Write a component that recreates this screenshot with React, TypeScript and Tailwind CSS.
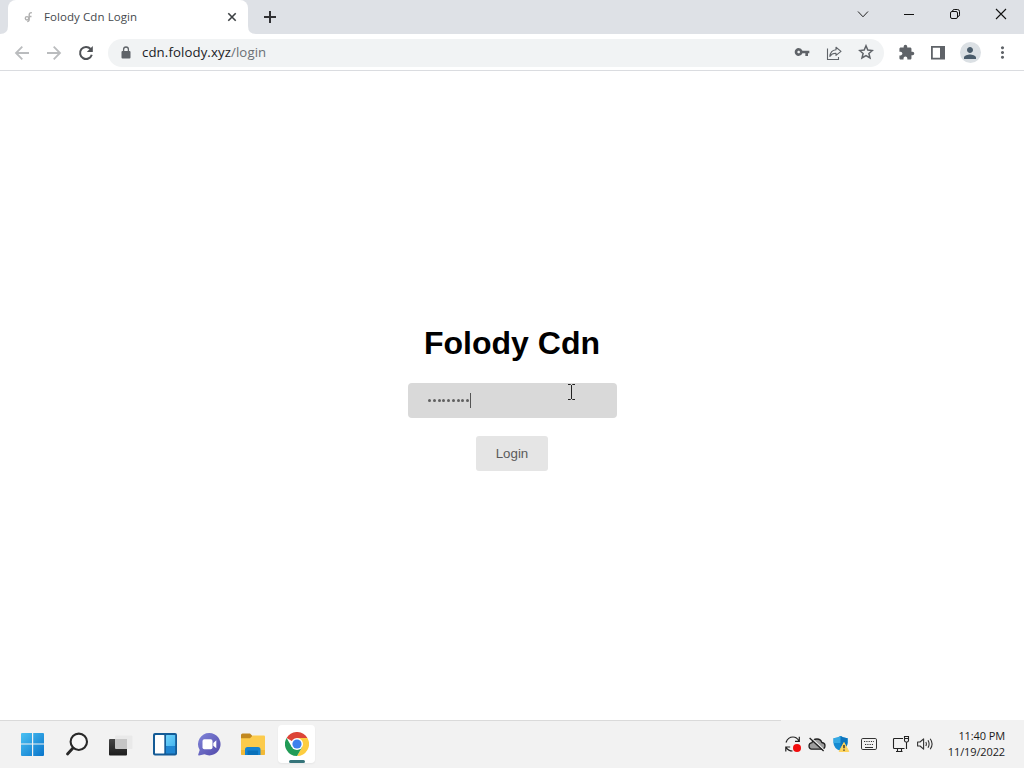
import type { ReactNode } from "react";
import { MdExtension, MdMoreVert, MdPerson, MdVpnKey } from "react-icons/md";

const Cell = ({ className, children }: { className: string; children: ReactNode }) => (
  <div className={`flex shrink-0 items-center justify-center ${className}`}>{children}</div>
);

const TabStrip = () => (
  <div className="flex h-[34px] bg-[#dee1e6]">
    {/* Foot of the tab on the left */}
    <svg className="mt-[26px] h-2 w-2 shrink-0" viewBox="0 0 8 8">
      <path d="M8 0V8H0Q8 8 8 0Z" fill="#fff" />
    </svg>
    <div className="flex w-60 shrink-0 items-center rounded-t-lg bg-white pr-2 pl-[14px]">
      <svg className="h-4 w-3" viewBox="0 0 12 16" fill="none" stroke="#b0b0b0" strokeWidth="1.4">
        <path d="M9.8 3.8Q7.5 3.3 7.2 5.5V10.5Q7 12.6 5.2 12.6M7.2 7.5H9.5" />
        <circle cx="5" cy="9.3" r="1.7" />
      </svg>
      <span className="ml-[10px] text-[11.5px] tracking-[0.08px] whitespace-nowrap text-[#45494d]">
        Folody Cdn Login
      </span>
      <svg className="ml-auto h-4 w-4" viewBox="0 0 16 16" stroke="#3c4043" strokeWidth="1.6">
        <path d="M4.3 4.3l7.4 7.4M11.7 4.3l-7.4 7.4" />
      </svg>
    </div>
    <svg className="mt-[26px] h-2 w-2 shrink-0" viewBox="0 0 8 8">
      <path d="M0 0V8H8Q0 8 0 0Z" fill="#fff" />
    </svg>
    <Cell className="w-7">
      <svg className="h-4 w-4" viewBox="0 0 16 16" stroke="#303134" strokeWidth="2">
        <path d="M8 2v12M2 8h12" />
      </svg>
    </Cell>

    {/* Window buttons */}
    <div className="ml-auto flex h-7">
      <Cell className="w-[46px]">
        <svg className="h-4 w-4" viewBox="0 0 16 16" fill="none" stroke="#222">
          <path d="M3 5.5l5 5.3 5-5.3" />
        </svg>
      </Cell>
      <Cell className="w-[46px]">
        <svg className="h-4 w-4" viewBox="0 0 16 16" stroke="#111">
          <path d="M3 8.5h10" />
        </svg>
      </Cell>
      <Cell className="w-[46px]">
        <svg className="h-4 w-4" viewBox="0 0 16 16" fill="none" stroke="#111">
          <rect x="3.5" y="5.5" width="7" height="7" rx="1.5" />
          <path d="M5.5 5.2V5Q5.8 3.5 7.2 3.5H10.5Q12.5 3.5 12.5 5.5V8.8Q12.5 10.4 11 10.5" />
        </svg>
      </Cell>
      <Cell className="w-[46px]">
        <svg className="h-4 w-4" viewBox="0 0 16 16" stroke="#111" strokeWidth="1.1">
          <path d="M3 3l10 10M13 3L3 13" />
        </svg>
      </Cell>
    </div>
  </div>
);

const Toolbar = () => (
  <div className="flex h-[37px] items-center border-b border-[#dadce0] bg-white pt-px pl-[6px] text-[#5f6368]">
    <Cell className="w-8">
      <svg className="h-4 w-4" viewBox="0 0 16 16" fill="none" stroke="#babcbe" strokeWidth="1.8">
        <path d="M15 8H2.2M8.3 1.7L2 8l6.3 6.3" />
      </svg>
    </Cell>
    <Cell className="w-8">
      <svg className="h-4 w-4" viewBox="0 0 16 16" fill="none" stroke="#babcbe" strokeWidth="1.8">
        <path d="M1 8H13.8M7.7 1.7L14 8l-6.3 6.3" />
      </svg>
    </Cell>
    <Cell className="w-8">
      <svg className="h-4 w-4" viewBox="0 0 16 16" fill="none" stroke="#4f5256" strokeWidth="2">
        <path d="M12.6 4A6 6 0 1 0 13.8 9.8" />
        <path d="M14.8 1V7H8.8Z" fill="#4f5256" stroke="none" />
      </svg>
    </Cell>
    <div className="ml-[6px] flex h-7 w-[776px] items-center rounded-full bg-[#f1f3f4] pl-[11px]">
      <svg className="h-[14px] w-[14px]" viewBox="0 0 14 14">
        <rect x="2.5" y="5" width="9" height="7.5" rx="1" fill="#5f6368" />
        <path d="M4.6 6V3.3Q4.6 1 7 1T9.4 3.3V6" fill="none" stroke="#5f6368" strokeWidth="1.3" />
      </svg>
      <span className="ml-[9px] text-[13.2px] tracking-[0.11px] whitespace-nowrap text-[#202124]">
        cdn.folody.xyz<span className="text-[#6b6f74]">/login</span>
      </span>
      <div className="ml-auto flex pr-[2px]">
        <Cell className="w-8 pb-[2px]">
          <MdVpnKey size={16} />
        </Cell>
        <Cell className="w-8">
          <svg className="h-4 w-4" viewBox="0 0 16 16" fill="none" stroke="#5f6368" strokeWidth="1.1">
            <path d="M1.5 3.5V14.5H12.5V12" />
            <path d="M10 2.3L15 6.4 10 10.4V8.2Q6 8 3.8 11.4 4.5 5.3 10 4.7Z" strokeLinejoin="round" />
          </svg>
        </Cell>
        <Cell className="w-8 pb-px">
          <svg className="h-4 w-4" viewBox="0 0 16 16" fill="none" stroke="#5f6368" strokeWidth="1.5">
            <path d="M8 1.8L9.8 6.1 14.4 6.5 10.9 9.5 12 14 8 11.6 4 14 5.1 9.5 1.6 6.5 6.2 6.1Z" />
          </svg>
        </Cell>
      </div>
    </div>
    <div className="ml-[6px] flex">
      <Cell className="w-8">
        <MdExtension size={17} />
      </Cell>
      <Cell className="w-8">
        <svg className="h-4 w-4" viewBox="0 0 16 16">
          <path d="M1 1H15V14.5H1ZM2.8 2.8V12.7H10V2.8Z" fill="#5f6368" fillRule="evenodd" />
        </svg>
      </Cell>
      <Cell className="w-8">
        <span className="flex h-[21px] w-[21px] items-center justify-center rounded-full bg-[#dbe0e4] text-[#4a5c6b]">
          <MdPerson size={18} />
        </span>
      </Cell>
      <Cell className="w-8">
        <MdMoreVert size={19} />
      </Cell>
    </div>
  </div>
);

const LoginPage = () => (
  <main className="relative flex flex-1 flex-col items-center bg-white pt-[254px] font-['Liberation_Sans',Arial,sans-serif]">
    <h1 className="text-[32px] leading-[37px] font-bold text-black">Folody Cdn</h1>
    <div className="mt-[21px] ml-px flex h-[35px] w-[209px] items-center rounded bg-[#d9d9d9] pl-5">
      <span className="flex gap-[1.75px]">
        {Array.from({ length: 9 }, (_, i) => (
          <span key={i} className="h-[3px] w-[3px] rounded-full bg-[#606060]" />
        ))}
      </span>
      <span className="ml-px h-[15px] w-px bg-[#555]" />
    </div>
    <button className="mt-[18px] h-[35px] w-[72px] rounded-[3px] bg-[#e5e5e5] text-[13.3px] text-[#5a5a5a]">
      Login
    </button>

    {/* Text cursor of the mouse */}
    <svg
      className="absolute top-[313px] left-[567px] h-[17px] w-[9px]"
      viewBox="0 0 9 17"
      fill="none"
      stroke="#222"
    >
      <path d="M1 .5H3.5L4.5 1.5 5.5 .5H8M4.5 1V15M1 15.5H3.5L4.5 14.5 5.5 15.5H8" />
    </svg>
  </main>
);

const StartIcon = () => (
  <svg className="h-6 w-6" viewBox="0 0 24 24">
    <defs>
      <linearGradient id="start" x1="0" y1="0" x2="24" y2="24" gradientUnits="userSpaceOnUse">
        <stop stopColor="#4cc3f4" />
        <stop offset="1" stopColor="#0873ca" />
      </linearGradient>
    </defs>
    <path d="M1 1H11V11.4H0V2Q0 1 1 1ZM12.2 1H22Q23 1 23 2V11.4H12.2ZM0 12.6H11V24H1Q0 24 0 23ZM12.2 12.6H23V23Q23 24 22 24H12.2Z" fill="url(#start)" />
  </svg>
);

const SearchIcon = () => (
  <svg className="h-6 w-6" viewBox="0 0 24 24" fill="none" stroke="#292929">
    <circle cx="13.8" cy="9.8" r="8.2" strokeWidth="2.1" fill="#f8f8f8" />
    <path d="M8 16L2.5 22" strokeWidth="2.8" strokeLinecap="round" />
  </svg>
);

const TaskViewIcon = () => (
  <svg className="h-6 w-6" viewBox="0 0 24 24">
    <defs>
      <linearGradient id="task" x2="0" y2="1">
        <stop stopColor="#454545" />
        <stop offset="1" stopColor="#1d1d1d" />
      </linearGradient>
    </defs>
    <rect x="6" y="3.5" width="17.5" height="13.5" rx="1" fill="#e9e9e9" />
    <rect x="0" y="7" width="18" height="16.5" rx="1" fill="url(#task)" />
    <path d="M6 7H18V17H7Q6 17 6 16Z" fill="#c5c5c5" />
  </svg>
);

const WidgetsIcon = () => (
  <svg className="h-6 w-6" viewBox="0 0 24 24">
    <defs>
      <linearGradient id="widgets" x2="1" y2="1">
        <stop stopColor="#71d4fb" />
        <stop offset="1" stopColor="#45b5ef" />
      </linearGradient>
    </defs>
    <rect y="1" width="24" height="22.5" rx="2" fill="#145b96" />
    <rect x="2" y="3" width="9.3" height="18.5" rx=".6" fill="#fff" />
    <rect x="13" y="3" width="9.2" height="11" rx=".6" fill="url(#widgets)" />
    <rect x="13" y="14" width="9.2" height="7.5" rx=".6" fill="#1f86d2" />
  </svg>
);

const ChatIcon = () => (
  <svg className="mr-px h-6 w-6" viewBox="0 0 24 24">
    <defs>
      <linearGradient id="chat" x2="1" y2="1">
        <stop stopColor="#8186da" />
        <stop offset="1" stopColor="#5148a9" />
      </linearGradient>
    </defs>
    <path d="M12.5 1A11.2 11.2 0 1 1 7.5 22.3L2 23.4Q1 23.5 1.2 22.4L2.7 18A11.2 11.2 0 0 1 12.5 1Z" fill="url(#chat)" />
    <rect x="5.5" y="7.3" width="10" height="10" rx="1.8" fill="#fff" />
    <path d="M16.3 11L19.3 8.3V16.2L16.3 13.8Z" fill="#fff" />
  </svg>
);

const FolderIcon = () => (
  <svg className="h-6 w-[26px]" viewBox="0 0 26 24">
    <path d="M1 3Q1 1.5 2.5 1.5H10L12.5 4V9H1Z" fill="#c18820" />
    <path d="M1 6.2H10L12.7 3.5H24Q25 3.5 25 4.7V21.7Q25 23 23.7 23H2.3Q1 23 1 21.7Z" fill="#fccb4c" />
    <path d="M1 18H25V21.7Q25 23 23.7 23H2.3Q1 23 1 21.7Z" fill="#f2b936" />
    <path d="M5 23V17.5Q5 15 7.5 15H18Q20.5 15 20.5 17.5V23Z" fill="#1683d0" />
    <path d="M7.5 18.5H18V23H7.5Z" fill="#0870ba" />
  </svg>
);

const ChromeIcon = () => (
  <svg className="h-6 w-6" viewBox="0 0 24 24">
    <path d="M12 12L1.6 6A12 12 0 0 1 22.4 6Z" fill="#dc4437" />
    <path d="M12 6H22.4A12 12 0 0 1 12 24L17.2 15Z" fill="#fdcd40" />
    <path d="M1.6 6A12 12 0 0 0 12 24L17.2 15 12 12 6.8 15Z" fill="#219b56" />
    <circle cx="12" cy="12" r="6" fill="#fff" />
    <circle cx="12" cy="12" r="4.6" fill="#3d81ed" />
  </svg>
);

const pinned = [StartIcon, SearchIcon, TaskViewIcon, WidgetsIcon, ChatIcon, FolderIcon];

const Tray = () => (
  <div className="ml-auto flex items-center">
    <Cell className="w-6">
      <svg className="h-[18px] w-[18px]" viewBox="0 0 18 18" fill="none" stroke="#222" strokeWidth="1.2">
        <path d="M2 7.5Q4 2 9 2 12.8 2 15 6M15.3 1.8V6.3H11M6.2 12H1.8V16.5M2 12.3Q4.5 16 8.5 16" />
        <circle cx="13" cy="13" r="4" fill="#f20d0d" stroke="none" />
      </svg>
    </Cell>
    <Cell className="w-6">
      <svg className="h-4 w-[18px]" viewBox="0 0 18 16" fill="none" stroke="#222" strokeWidth="1.3">
        <path d="M4.8 13.2Q1 13.2 1 10 1 7.2 4 6.7 5 3 9 3 12.8 3 13.8 6.5 17 6.8 17 9.8 17 13.2 13.4 13.2Z" fill="#9e9e9e" />
        <path d="M2.8 1.5L16.4 14.2" stroke="#f2f2f2" strokeWidth="1.2" />
        <path d="M1.6 2L15.6 15" />
      </svg>
    </Cell>
    <Cell className="w-6">
      <svg className="h-[18px] w-[18px]" viewBox="0 0 18 18">
        <path d="M8.5 1Q11 3 15.5 3.2V8Q15.5 13 8.5 16 1.5 13 1.5 8V3.2Q6 3 8.5 1Z" fill="#168bd2" />
        <path d="M8.5 1Q11 3 15.5 3.2V8H1.5V3.2Q6 3 8.5 1Z" fill="#36a9e3" />
        <path d="M8.5 1Q11 3 15.5 3.2V8Q15.5 13 8.5 16Z" fill="#0d74bd" />
        <path d="M12 7.5L16.8 16.5H7.2Z" fill="#ffd45c" stroke="#ffd45c" strokeLinejoin="round" />
        <path d="M12 10V13.3M12 14.5V15.8" stroke="#242424" strokeWidth="1.3" />
      </svg>
    </Cell>
    <Cell className="w-8">
      <svg className="h-4 w-4" viewBox="0 0 16 16" fill="none" stroke="#333">
        <rect x=".5" y="2.5" width="15" height="11" rx="1.3" />
        <path d="M3 5.5h10M4 8.5h8" strokeDasharray="1.2 1.1" strokeWidth="1.2" />
        <path d="M4 11.5h8" />
      </svg>
    </Cell>
    <Cell className="w-8">
      <svg className="h-[18px] w-[18px]" viewBox="0 0 18 18" fill="none" stroke="#222" strokeWidth="1.1">
        <path d="M11 3.5H2.3Q1.5 3.5 1.5 4.3V12.7Q1.5 13.5 2.3 13.5H12.5M4 16.5H10.5M5.5 13.5V16.5M9.5 13.5V16.5" />
        <path d="M12.5 1.5H16.5V5.5Q16.5 7 14.5 7.2 12.5 7 12.5 5.5ZM14.5 7V14M12.5 3.5H16.5" />
      </svg>
    </Cell>
    <Cell className="w-4">
      <svg className="h-4 w-4" viewBox="0 0 16 16" fill="none" stroke="#333" strokeWidth="1.1">
        <path d="M.6 6H3L6.6 2.8V13.2L3 10H.6ZM8.8 6Q10 8 8.8 10M11 4.3Q13.2 8 11 11.7M13.2 2.8Q17 8 13.2 13.2" strokeLinejoin="round" />
      </svg>
    </Cell>
    <div className="mr-[19px] flex w-[72px] flex-col items-end text-[11px] leading-4 whitespace-nowrap text-[#1b1b1b]">
      <span className="tracking-[-0.1px]">11:40 PM</span>
      <span className="tracking-[-0.12px]">11/19/2022</span>
    </div>
  </div>
);

const Taskbar = () => (
  <footer className="flex h-12 bg-[#f2f2f2]">
    <div className="flex w-[783px] items-center border-t border-[#dadada] pb-px pl-[11px]">
      {pinned.map((Icon, i) => (
        <Cell key={i} className="w-11">
          <Icon />
        </Cell>
      ))}
      <div className="relative ml-[3px] flex h-[38px] w-[37px] items-center justify-center rounded bg-white shadow-xs">
        <ChromeIcon />
        <span className="absolute bottom-0 h-[3px] w-4 rounded-full bg-[#35747a]" />
      </div>
    </div>
    <Tray />
  </footer>
);

export default function App() {
  return (
    <div className="flex h-[768px] w-[1024px] flex-col overflow-hidden bg-white font-['Open_Sans','Noto_Sans',sans-serif]">
      <TabStrip />
      <Toolbar />
      <LoginPage />
      <Taskbar />
    </div>
  );
}
